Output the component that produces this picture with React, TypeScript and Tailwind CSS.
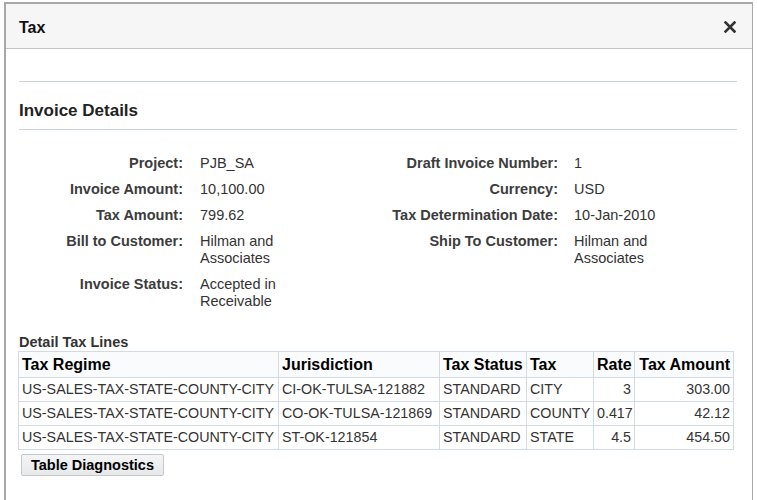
import React from "react";

const rows = [
  ["US-SALES-TAX-STATE-COUNTY-CITY", "CI-OK-TULSA-121882", "STANDARD", "CITY", "3", "303.00"],
  ["US-SALES-TAX-STATE-COUNTY-CITY", "CO-OK-TULSA-121869", "STANDARD", "COUNTY", "0.417", "42.12"],
  ["US-SALES-TAX-STATE-COUNTY-CITY", "ST-OK-121854", "STANDARD", "STATE", "4.5", "454.50"],
];

function Field({
  label,
  value,
  labelW,
  gap,
}: {
  label: string;
  value: React.ReactNode;
  labelW: string;
  gap: string;
}) {
  return (
    <div className="flex">
      <div className={`${labelW} shrink-0 text-right font-bold text-[#3c3c3c]`}>{label}</div>
      <div className={`${gap} w-[92px] text-[#333]`}>{value}</div>
    </div>
  );
}

export default function App() {
  return (
    <div
      className="w-[757px] h-[500px] bg-white overflow-hidden pl-[4px] pt-[2px]"
      style={{ fontFamily: '"Liberation Sans", Arial, sans-serif' }}
    >
      <div className="w-[749px] h-[520px] border-l-[2px] border-t-[2px] border-r border-[#a8a8a8] bg-white">
        <div className="h-[45px] bg-[#f6f6f6] border-b border-[#c4c4c4] flex items-center justify-between pl-[13px] pr-[16px]">
          <div className="text-[16px] font-bold text-[#111] pt-[3px]">Tax</div>
          <svg width="12" height="12" viewBox="0 0 12 12" className="mt-[2px]">
            <path d="M1.5 1.5 L10.5 10.5 M10.5 1.5 L1.5 10.5" stroke="#333" strokeWidth="2.6" strokeLinecap="square" />
          </svg>
        </div>
        <div className="pl-[13px] pr-[15px]">
          <div className="h-[33px] border-b border-[#ccd3da]" />
          <div className="h-[48px] flex items-end pb-[8px] text-[17px] leading-[20px] font-bold text-[#222] border-b border-[#ccd3da]">
            <span>Invoice Details</span>
          </div>
          <div className="flex mt-[25px] text-[14.5px] leading-[17px]">
            <div className="flex flex-col gap-y-[9px]">
              <Field gap="ml-[17px]" labelW="w-[164px]" label="Project:" value="PJB_SA" />
              <Field gap="ml-[17px]" labelW="w-[164px]" label="Invoice Amount:" value="10,100.00" />
              <Field gap="ml-[17px]" labelW="w-[164px]" label="Tax Amount:" value="799.62" />
              <Field gap="ml-[17px]" labelW="w-[164px]" label="Bill to Customer:" value="Hilman and Associates" />
              <Field gap="ml-[17px]" labelW="w-[164px]" label="Invoice Status:" value="Accepted in Receivable" />
            </div>
            <div className="flex flex-col gap-y-[9px]">
              <Field gap="ml-[16px]" labelW="w-[266px]" label="Draft Invoice Number:" value="1" />
              <Field gap="ml-[16px]" labelW="w-[266px]" label="Currency:" value="USD" />
              <Field gap="ml-[16px]" labelW="w-[266px]" label="Tax Determination Date:" value="10-Jan-2010" />
              <Field gap="ml-[16px]" labelW="w-[266px]" label="Ship To Customer:" value="Hilman and Associates" />
            </div>
          </div>
          <div className="mt-[24px] text-[14.5px] leading-[17px] font-bold text-[#333]">Detail Tax Lines</div>
          <table className="table-fixed border-collapse w-[716px] -ml-[1px] text-[14.3px]">
            <colgroup>
              <col className="w-[260px]" />
              <col className="w-[161px]" />
              <col className="w-[87px]" />
              <col className="w-[67px]" />
              <col className="w-[41px]" />
              <col className="w-[99px]" />
            </colgroup>
            <thead>
              <tr className="h-[26px] bg-[#fafbfc]">
                {["Tax Regime", "Jurisdiction", "Tax Status", "Tax", "Rate", "Tax Amount"].map((h, i) => (
                  <th
                    key={h}
                    className={`border border-[#d3dbe2] px-[3px] text-[16px] font-bold text-black whitespace-nowrap overflow-hidden ${
                      i >= 4 ? "text-right" : "text-left"
                    }`}
                  >
                    {h}
                  </th>
                ))}
              </tr>
            </thead>
            <tbody>
              {rows.map((r, ri) => (
                <tr key={ri} className="h-[24px]">
                  {r.map((c, i) => (
                    <td
                      key={i}
                      className={`border border-[#d3dbe2] px-[3px] text-[#333] whitespace-nowrap overflow-hidden ${
                        i >= 4 ? "text-right" : "text-left"
                      }`}
                    >
                      {c}
                    </td>
                  ))}
                </tr>
              ))}
            </tbody>
          </table>
          <button className="mt-[4px] ml-[2px] w-[143px] h-[22px] rounded-[2px] border border-[#c4c8cc] bg-gradient-to-b from-[#f4f5f6] to-[#e6e8ea] text-[14.5px] font-bold text-black">
            Table Diagnostics
          </button>
        </div>
      </div>
    </div>
  );
}
